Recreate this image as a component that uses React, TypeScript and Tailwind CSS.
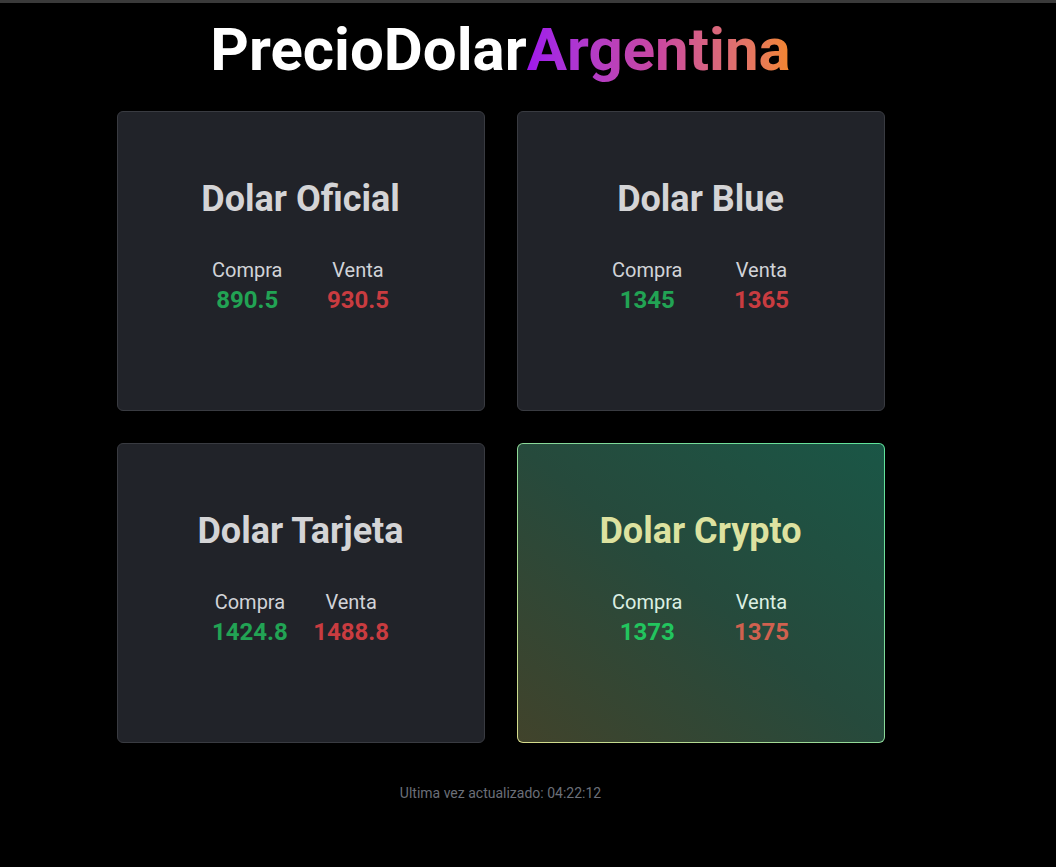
const quotes = [
    { name: 'Dolar Oficial', compra: '890.5', venta: '930.5' },
    { name: 'Dolar Blue', compra: '1345', venta: '1365' },
    { name: 'Dolar Tarjeta', compra: '1424.8', venta: '1488.8' },
]

const Prices = ({ compra, venta, highlight }: { compra: string, venta: string, highlight?: boolean }) => (
    <div className="mt-[37px] mx-auto w-[177px] flex justify-between">
        <div className="flex flex-col items-center">
            <span className={`text-xl ${highlight ? 'text-[#dcefe2]' : 'text-[#d1d3d8]'}`}>Compra</span>
            <span className={`text-2xl font-bold ${highlight ? 'text-[#22c55e]' : 'text-[#22a354]'}`}>{compra}</span>
        </div>
        <div className="flex flex-col items-center">
            <span className={`text-xl ${highlight ? 'text-[#dcefe2]' : 'text-[#d1d3d8]'}`}>Venta</span>
            <span className={`text-2xl font-bold ${highlight ? 'text-[#d0614f]' : 'text-[#c93c40]'}`}>{venta}</span>
        </div>
    </div>
)

const App = () => {
    return (
        <div className="min-h-screen bg-black font-['Roboto',sans-serif]">
            <div className="h-[3px] bg-[#3a3a3a]" />
            <div className="w-[1001px] flex flex-col items-center">
                <h1 className="mt-[17px] text-6xl leading-none font-bold text-white">
                    PrecioDolar
                    <span className="bg-gradient-to-r from-[#a016ec] via-[#c9479f] to-[#f2862a] bg-clip-text text-transparent pb-2">Argentina</span>
                </h1>

                <div className="mt-[31px] grid grid-cols-[368px_368px] gap-8">
                    {quotes.map((q) => (
                        <div key={q.name} className="h-[300px] rounded-md border border-[#393b41] bg-[#212329] pt-[67px]">
                            <h2 className="text-center text-4xl font-bold text-[#d4d4d6]">{q.name}</h2>
                            <Prices compra={q.compra} venta={q.venta} />
                        </div>
                    ))}
                    <div className="h-[300px] rounded-md p-px bg-[linear-gradient(to_top_right,#d8dc8c,#86d99a_55%,#5de49b)]">
                        <div className="h-full rounded-[5px] bg-[linear-gradient(to_top_right,#41432b,#264a3c_50%,#1a5646)] pt-[67px]">
                            <h2 className="text-center text-4xl font-bold text-[#dde2a0]">Dolar Crypto</h2>
                            <Prices compra="1373" venta="1375" highlight />
                        </div>
                    </div>
                </div>

                <p className="mt-10 text-sm leading-5 text-[#6b6f78]">Ultima vez actualizado: 04:22:12</p>
            </div>
        </div>
    )
}

export default App
